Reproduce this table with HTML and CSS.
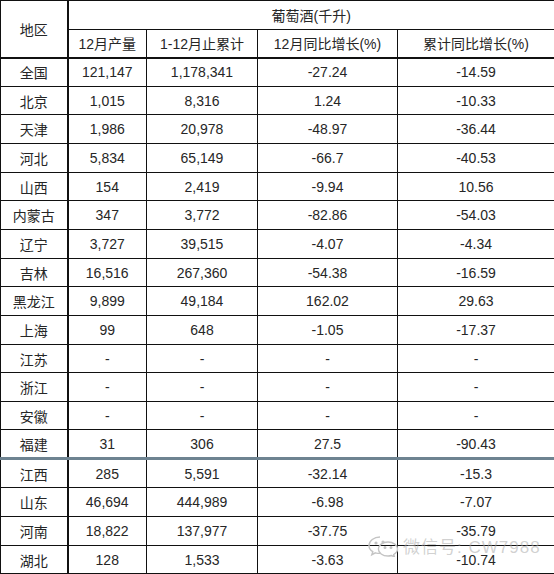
FILE: index.html
```html
<!DOCTYPE html>
<html lang="zh">
<head>
<meta charset="utf-8">
<link rel="stylesheet" href="styles.css">
</head>
<body>
<div class="page">
<table class="data">
<colgroup>
<col class="c1"><col class="c2"><col class="c3"><col class="c4"><col class="c5">
</colgroup>
<thead>
<tr class="h1"><th rowspan="2" class="region">地区</th><th colspan="4">葡萄酒(千升)</th></tr>
<tr class="h2"><th>12月产量</th><th>1-12月止累计</th><th>12月同比增长(%)</th><th>累计同比增长(%)</th></tr>
</thead>
<tbody>
<tr class="r29"><td class="region">全国</td><td>121,147</td><td>1,178,341</td><td>-27.24</td><td>-14.59</td></tr>
<tr class="r28"><td class="region">北京</td><td>1,015</td><td>8,316</td><td>1.24</td><td>-10.33</td></tr>
<tr class="r29"><td class="region">天津</td><td>1,986</td><td>20,978</td><td>-48.97</td><td>-36.44</td></tr>
<tr class="r29"><td class="region">河北</td><td>5,834</td><td>65,149</td><td>-66.7</td><td>-40.53</td></tr>
<tr class="r28"><td class="region">山西</td><td>154</td><td>2,419</td><td>-9.94</td><td>10.56</td></tr>
<tr class="r29"><td class="region">内蒙古</td><td>347</td><td>3,772</td><td>-82.86</td><td>-54.03</td></tr>
<tr class="r29"><td class="region">辽宁</td><td>3,727</td><td>39,515</td><td>-4.07</td><td>-4.34</td></tr>
<tr class="r28"><td class="region">吉林</td><td>16,516</td><td>267,360</td><td>-54.38</td><td>-16.59</td></tr>
<tr class="r29"><td class="region">黑龙江</td><td>9,899</td><td>49,184</td><td>162.02</td><td>29.63</td></tr>
<tr class="r29"><td class="region">上海</td><td>99</td><td>648</td><td>-1.05</td><td>-17.37</td></tr>
<tr class="r28"><td class="region">江苏</td><td>-</td><td>-</td><td>-</td><td>-</td></tr>
<tr class="r29"><td class="region">浙江</td><td>-</td><td>-</td><td>-</td><td>-</td></tr>
<tr class="r28"><td class="region">安徽</td><td>-</td><td>-</td><td>-</td><td>-</td></tr>
<tr class="r29 split"><td class="region">福建</td><td>31</td><td>306</td><td>27.5</td><td>-90.43</td></tr>
<tr class="r29"><td class="region">江西</td><td>285</td><td>5,591</td><td>-32.14</td><td>-15.3</td></tr>
<tr class="r29"><td class="region">山东</td><td>46,694</td><td>444,989</td><td>-6.98</td><td>-7.07</td></tr>
<tr class="r29"><td class="region">河南</td><td>18,822</td><td>137,977</td><td>-37.75</td><td>-35.79</td></tr>
<tr class="r28"><td class="region">湖北</td><td>128</td><td>1,533</td><td>-3.63</td><td>-10.74</td></tr>
</tbody>
</table>
<div class="watermark">
<svg class="wm-icon" width="34" height="22" viewBox="0 0 34 22" fill="none" stroke="#c4c4c4" stroke-width="1.4">
<path d="M13 2c-6 0-11 3.8-11 8.4 0 2.6 1.5 4.8 3.8 6.3l-1 3 3.6-1.9c1.4.4 2.9.6 4.6.6"/>
<path d="M21 7c-5.5 0-9.6 3.2-9.6 7 0 3.9 4.1 7 9.6 7 1.200 0 2.4-.2 3.5-.5l3 1.6-.8-2.600c2.3-1.300 3.8-3.300 3.8-5.500 0-3.800-4.100-7-9.500-7z"/>
<circle cx="9" cy="8" r="0.9" fill="#c4c4c4"/><circle cx="16" cy="7" r="0.9" fill="#c4c4c4"/>
<circle cx="18" cy="12.5" r="0.8" fill="#c4c4c4"/><circle cx="24" cy="12.5" r="0.8" fill="#c4c4c4"/>
</svg>
<span class="wm-text">微信号: CW7988</span>
</div>
</div>
</body>
</html>
```

FILE: styles.css
```css
html, body {
  margin: 0;
  padding: 0;
  background: #fff;
}
.page {
  position: relative;
  width: 554px;
  height: 574px;
  overflow: hidden;
}
.data {
  border-collapse: collapse;
  table-layout: fixed;
  width: 554px;
  font-family: "Liberation Sans", "Noto Sans CJK SC", sans-serif;
  font-size: 14px;
  color: #262626;
}
.c1 { width: 67px; }
.c2 { width: 79px; }
.c3 { width: 111px; }
.c4 { width: 140px; }
.c5 { width: 157px; }
.data th, .data td {
  border: 1px solid #111;
  padding: 0;
  text-align: center;
  vertical-align: middle;
  font-weight: normal;
  white-space: nowrap;
}
.data th.region, .data td.region {
  border-right: 2px solid #111;
}
.h1 { height: 29px; }
.h2 { height: 28px; }
.h2 th { border-bottom: 2px solid #111; }
.h1 th.region { border-bottom: 2px solid #111; }
.r29 { height: 29px; }
.r28 { height: 28px; }
.split td { border-bottom: 3px solid #6e8391; }
.watermark {
  position: absolute;
  left: 367px;
  top: 533px;
  display: flex;
  align-items: center;
  gap: 2px;
  pointer-events: none;
}
.wm-text {
  font-family: "Liberation Sans", "Noto Sans CJK SC", sans-serif;
  font-size: 17px;
  letter-spacing: 1px;
  color: rgba(170, 170, 170, 0.55);
}
```
